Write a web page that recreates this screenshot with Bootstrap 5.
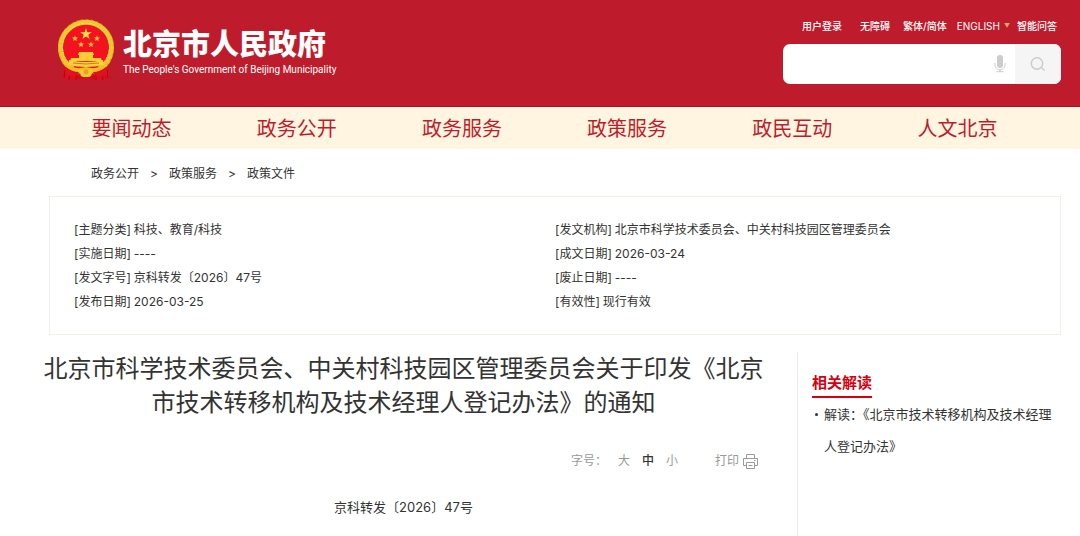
<!DOCTYPE html>
<html lang="zh-CN">
<head>
<meta charset="utf-8">
<meta name="viewport" content="width=device-width, initial-scale=1">
<title>北京市人民政府</title>
<link href="https://cdn.jsdelivr.net/npm/bootstrap@5.3.0/dist/css/bootstrap.min.css" rel="stylesheet">
<style>
  body { font-family: Inter, "Noto Sans CJK SC", sans-serif; font-size: 12px; line-height: 24px; color: #333; background: #fff; }
  a { color: inherit; text-decoration: none; }
  .page-gutter { padding-left: 49px; padding-right: 19px; }
  .site-header { background: #be1c2c; border-bottom: 1px solid #a01524; padding-top: 18px; padding-bottom: 22px; }
  .emblem { width: 58px; height: 64px; margin-left: 8px; }
  .brand-cn { font-family: "Noto Sans CJK SC", sans-serif; font-weight: 900; font-size: 29px; line-height: 42px; }
  .brand-en { font-family: Roboto, sans-serif; font-size: 10px; line-height: 14px; }
  .brand-text { padding-top: 3px; margin-left: 8px; }
  .tool-panel { width: 278px; }
  .quick-links { font-size: 10px; font-weight: 500; line-height: 16px; padding-right: 4px; margin-bottom: 10px; }
  .quick-links .caret { color: #d9a860; font-size: 6px; }
  .quick-links .login { margin-right: 18px; }
  .quick-links .access { margin-right: 13px; }
  .quick-links .lang { margin-left: 10px; margin-right: 7px; }
  .search-box { height: 40px; border-radius: 7px; background: #fff; }
  .search-box input { flex: 1 1 0; min-width: 0; outline: 0; }
  .search-box .voice-btn { width: 30px; flex: none; }
  .search-box .find-btn { width: 46px; flex: none; background: #f5f5f5; }
  .main-nav { background: #fff5e0; padding-left: 49px; padding-right: 40px; }
  .main-nav a { color: #be1c2c; font-size: 20px; line-height: 40px; padding-top: 2px; }
  .crumbs { padding: 13px 42px 10px; gap: 11px; }
  .meta-box { border: 1px solid #f0f0e6; padding: 21px 24px 20px; }
  .meta-box dt { font-weight: 400; margin-right: 3px; }
  .meta-box dd { margin: 0; }
  .doc-row { padding-top: 17px; padding-left: 43px; padding-right: 19px; }
  .doc-title { font-size: 24px; line-height: 34px; font-weight: 400; }
  .doc-tools { color: #999; margin-top: 29px; padding-right: 6px; }
  .doc-tools button { color: inherit; }
  .doc-tools .active { color: #333; font-weight: 500; }
  .size-set { gap: 12px; margin-left: 11px; margin-right: 37px; }
  .doc-number { font-size: 13px; margin: 22px 0; }
  .related { width: 264px; margin-left: 33px; border-left: 1px solid #e8e8e8; padding: 18px 0 0 14px; }
  .related h2 { font-size: 15px; line-height: 26px; font-weight: 700; color: #d7000f; border-bottom: 2px solid #d7000f; }
  .related ul { font-size: 13px; line-height: 32px; padding-left: 12px; }
  .related li { position: relative; }
  .related li::before { content: ""; position: absolute; left: -9px; top: 15px; width: 3px; height: 3px; border-radius: 50%; background: #333; }
</style>
</head>
<body class="min-vh-100 d-flex flex-column">
<header class="site-header page-gutter d-flex justify-content-between align-items-start">
  <a href="#" class="d-flex align-items-start text-white">
    <svg class="emblem" viewBox="0 0 58 64" aria-hidden="true">
      <path d="M9 43L5 60l7 1 4 2 6-2 7 1 7-1 6 2 4-2 7-1-4-17z" fill="#dc0f1e"/>
      <path d="M8 52l-1 8M13 54l-1 8M19 56v6M50 52l1 8M45 54l1 8M39 56v6" stroke="#a50a17"/>
      <circle cx="29" cy="29" r="24" fill="#f21220"/>
      <path d="M15 51A25.500 25.500 0 1 1 43 51" fill="none" stroke="#efc62b" stroke-width="5"/>
      <path d="M14 52A27.500 27.500 0 1 1 44 52" fill="none" stroke="#d6961b" stroke-width=".7" stroke-dasharray="3 2"/>
      <path d="M17 49A23.500 23.500 0 1 1 41 49" fill="none" stroke="#ffe163" stroke-dasharray="3 1"/>
      <path d="M29 10l1.400 4.200h4.400l-3.500 2.600 1.300 4.200-3.600-2.600-3.600 2.600 1.300-4.200-3.500-2.600h4.400z" fill="#ffe04a"/>
      <g fill="#f7c936">
        <path id="star" d="M18 17.500l.8 2.100h2.200l-1.700 1.400.6 2.100-1.900-1.200-1.900 1.200.6-2.100-1.700-1.400h2.200z"/>
        <use href="#star" x="22"/><use href="#star" x="6" y="6"/><use href="#star" x="16" y="6"/>
      </g>
      <path d="M22 34h14l1 3h-1v3h8l1 3H13l1-3h8v-3h-1z" fill="#f8cc32"/>
      <path d="M12 42q17 4 34 0l1 5q-18 4-36 0z" fill="#f7d13b"/>
      <path d="M16 45q13 2 26 0" fill="none" stroke="#c98018"/>
      <path d="M11 47q8 5 18 2 10 3 18-2l1 5q-9 5-19 3-10 2-19-3z" fill="#f0bf28"/>
      <path d="M9 49q6 5 13 5l-3 4q-7 1-11-3zM49 49q-6 5-13 5l3 4q7 1 11-3z" fill="#e3101f"/>
      <path d="M22 52h14l-2 6q-5 3-10 0z" fill="#f5ca34"/>
      <circle cx="29" cy="54" r="2.500" fill="#e0a322"/>
      <path d="M19 57q5 3 10 2 5 1 10-2l-2 4-8-1-8 1z" fill="#c90d1b"/>
    </svg>
    <span class="brand-text d-flex flex-column">
      <span class="brand-cn">北京市人民政府</span>
      <span class="brand-en">The People's Government of Beijing Municipality</span>
    </span>
  </a>
  <div class="tool-panel">
    <nav class="quick-links d-flex justify-content-end text-white" aria-label="快捷入口">
      <a href="#" class="login">用户登录</a>
      <a href="#" class="access">无障碍</a>
      <a href="#">繁体/简体</a>
      <a href="#" class="lang d-flex fw-normal">ENGLISH<span class="caret ms-1">▼</span></a>
      <a href="#">智能问答</a>
    </nav>
    <form class="search-box d-flex overflow-hidden" role="search">
      <input type="text" class="border-0 bg-transparent px-3" aria-label="搜索">
      <button type="button" class="voice-btn btn p-0 border-0 d-flex align-items-center justify-content-center" aria-label="语音输入">
        <svg width="12" height="18" viewBox="0 0 12 18" fill="none" stroke="#ccc"><rect x="3" y="0" width="6" height="13" rx="3" fill="#ccc" stroke="none"/><path d="M1 8v2a5 5 0 0 0 10 0V8M6 15v2M2.500 16.700h7"/></svg>
      </button>
      <button type="submit" class="find-btn btn p-0 border-0 rounded-0 d-flex align-items-center justify-content-center" aria-label="搜索">
        <svg width="16" height="16" viewBox="0 0 16 16" fill="none" stroke="#ccc" stroke-width="1.500"><circle cx="7" cy="7.500" r="5.700"/><path d="M11.200 11.500L14.700 14.500"/></svg>
      </button>
    </form>
  </div>
</header>
<nav class="main-nav d-flex" aria-label="主导航">
  <a href="#" class="col text-center">要闻动态</a>
  <a href="#" class="col text-center">政务公开</a>
  <a href="#" class="col text-center">政务服务</a>
  <a href="#" class="col text-center">政策服务</a>
  <a href="#" class="col text-center">政民互动</a>
  <a href="#" class="col text-center">人文北京</a>
</nav>
<main class="flex-grow-1 d-flex flex-column">
  <div class="page-gutter">
    <nav class="crumbs d-flex" aria-label="当前位置">
      <a href="#">政务公开</a><span>&gt;</span><a href="#">政策服务</a><span>&gt;</span><a href="#">政策文件</a>
    </nav>
    <section class="meta-box">
      <div class="row g-0">
        <dl class="col-6 mb-0">
          <div class="d-flex"><dt>[主题分类]</dt><dd>科技、教育/科技</dd></div>
          <div class="d-flex"><dt>[实施日期]</dt><dd>----</dd></div>
          <div class="d-flex"><dt>[发文字号]</dt><dd>京科转发〔2026〕47号</dd></div>
          <div class="d-flex"><dt>[发布日期]</dt><dd>2026-03-25</dd></div>
        </dl>
        <dl class="col-6 mb-0">
          <div class="d-flex"><dt>[发文机构]</dt><dd>北京市科学技术委员会、中关村科技园区管理委员会</dd></div>
          <div class="d-flex"><dt>[成文日期]</dt><dd>2026-03-24</dd></div>
          <div class="d-flex"><dt>[废止日期]</dt><dd>----</dd></div>
          <div class="d-flex"><dt>[有效性]</dt><dd>现行有效</dd></div>
        </dl>
      </div>
    </section>
  </div>
  <div class="doc-row d-flex flex-grow-1">
    <article class="flex-grow-1">
      <h1 class="doc-title text-center mb-0">北京市科学技术委员会、中关村科技园区管理委员会关于印发《北京<wbr>市技术转移机构及技术经理人登记办法》的通知</h1>
      <div class="doc-tools d-flex justify-content-end">
        <span>字号：</span>
        <div class="size-set d-flex">
          <button type="button" class="border-0 bg-transparent p-0">大</button>
          <button type="button" class="border-0 bg-transparent p-0 active">中</button>
          <button type="button" class="border-0 bg-transparent p-0">小</button>
        </div>
        <button type="button" class="border-0 bg-transparent p-0 d-flex align-items-center gap-1">打印
          <svg width="15" height="15" viewBox="0 0 15 15" fill="none" stroke="#999"><path d="M3.500 4.500v-4h8v4M3.500 11.500h-3v-7h14v7h-3M3.500 8.500h8v6h-8zM5.500 11.500h4M11 6.500h1.500"/></svg>
        </button>
      </div>
      <p class="doc-number text-center">京科转发〔2026〕47号</p>
    </article>
    <aside class="related flex-shrink-0">
      <h2 class="d-inline-block mb-0">相关解读</h2>
      <ul class="list-unstyled mb-0">
        <li><a href="#">解读：《北京市技术转移机构及技术经理人登记办法》</a></li>
      </ul>
    </aside>
  </div>
</main>
<script src="https://cdn.jsdelivr.net/npm/bootstrap@5.3.0/dist/js/bootstrap.bundle.min.js"></script>
</body>
</html>
